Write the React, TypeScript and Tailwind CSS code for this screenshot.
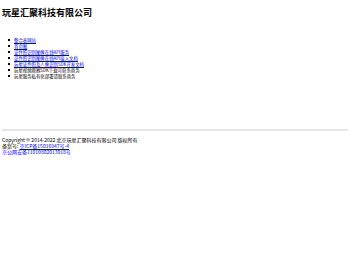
export default function App() {
  const links = [
    "整合表网站",
    "首页图",
    "证件照识别图像在线API服务",
    "证件照识别图像在线API接入文档",
    "玩星证件照及人像识别SDK开发文档",
  ];
  const plain = ["玩星视频观察SDK下载可获系商务", "玩星服务私有化部署请联系商务"];
  return (
    <div
      className="px-[2px] text-black bg-white"
      style={{ fontFamily: '"Noto Sans CJK SC", "Liberation Sans", sans-serif' }}
    >
      <h1 className="pt-[8px] text-[9px] leading-[10px] font-bold">玩星汇聚科技有限公司</h1>
      <ul className="mt-[19px] text-[4.4px] leading-[6px]">
        {links.map((t) => (
          <li key={t} className="flex items-center">
            <span className="ml-[6px] mr-[4px] w-[2px] h-[2px] bg-black" />
            <a href="#" className="text-[#0000ee] underline">
              {t}
            </a>
          </li>
        ))}
        {plain.map((t) => (
          <li key={t} className="flex items-center">
            <span className="ml-[6px] mr-[4px] w-[2px] h-[2px] bg-black" />
            <span>{t}</span>
          </li>
        ))}
      </ul>
      <hr className="mt-[50px] border-0 h-[2px] bg-[#e6e6e6]" />
      <div className="mt-[6px] text-[5px] leading-[6px]">
        <div>Copyright © 2014-2022 北京玩星汇聚科技有限公司 版权所有</div>
        <div>
          备案号:{" "}
          <a href="#" className="text-[#0000ee] underline">
            京ICP备15016947号-4
          </a>
        </div>
        <div>
          <a href="#" className="text-[#0000ee] underline">
            京公网安备11010802013018号
          </a>
        </div>
      </div>
    </div>
  );
}
